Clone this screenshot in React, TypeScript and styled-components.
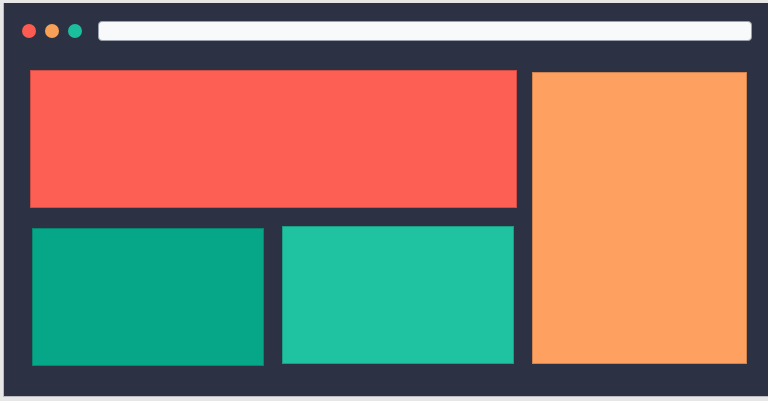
import styled, { createGlobalStyle } from 'styled-components';

const Global = createGlobalStyle`
  html, body {
    margin: 0;
    padding: 0;
    background: #e7e7e7;
    font-family: "Liberation Sans", Arial, sans-serif;
  }
`;

const Page = styled.div`
  width: 768px;
  height: 401px;
  padding: 3px 0 0 3px;
  box-sizing: border-box;
  overflow: hidden;
`;

const Window = styled.div`
  width: 765px;
  height: 394px;
  background: #2c3143;
  border-left: 1px solid #b9bbc0;
  border-bottom: 1px solid #b9bbc0;
  box-sizing: border-box;
  padding-top: 18px;
`;

const TitleBar = styled.div`
  display: flex;
  align-items: center;
  height: 20px;
  padding: 0 16px 0 18px;
`;

const Dots = styled.div`
  display: flex;
  gap: 9px;
  margin-right: 16px;
`;

const Dot = styled.span<{ $color: string }>`
  width: 14px;
  height: 14px;
  border-radius: 50%;
  background: ${(p) => p.$color};
`;

const AddressBar = styled.div`
  flex: 1;
  height: 20px;
  border-radius: 4px;
  background: #f7f9fb;
  border: 1px solid #9aa0ab;
  box-sizing: border-box;
`;

const Content = styled.div`
  display: flex;
  align-items: flex-start;
  margin-top: 29px;
  padding-left: 26px;
`;

const Column = styled.div`
  display: flex;
  flex-direction: column;
  width: 487px;
`;

const Row = styled.div`
  display: flex;
  align-items: flex-start;
  margin-top: 18px;
`;

const Tile = styled.div<{ $w: number; $h: number; $bg: string; $mt?: number; $ml?: number }>`
  width: ${(p) => p.$w}px;
  height: ${(p) => p.$h}px;
  margin-top: ${(p) => p.$mt ?? 0}px;
  margin-left: ${(p) => p.$ml ?? 0}px;
  background: ${(p) => p.$bg};
  border: 1px solid rgba(0, 0, 0, 0.18);
  box-sizing: border-box;
  flex-shrink: 0;
`;

export default function App() {
  return (
    <>
      <Global />
      <Page>
        <Window>
          <TitleBar>
            <Dots>
              <Dot $color="#fb5b51" />
              <Dot $color="#f9a058" />
              <Dot $color="#1cbf9d" />
            </Dots>
            <AddressBar />
          </TitleBar>
          <Content>
            <Column>
              <Tile $w={487} $h={138} $bg="#fe5f55" />
              <Row>
                <Tile $w={232} $h={138} $bg="#06a788" $mt={2} $ml={2} />
                <Tile $w={232} $h={138} $bg="#1fc3a1" $ml={18} />
              </Row>
            </Column>
            <Tile $w={215} $h={292} $bg="#fea060" $mt={2} $ml={15} />
          </Content>
        </Window>
      </Page>
    </>
  );
}
